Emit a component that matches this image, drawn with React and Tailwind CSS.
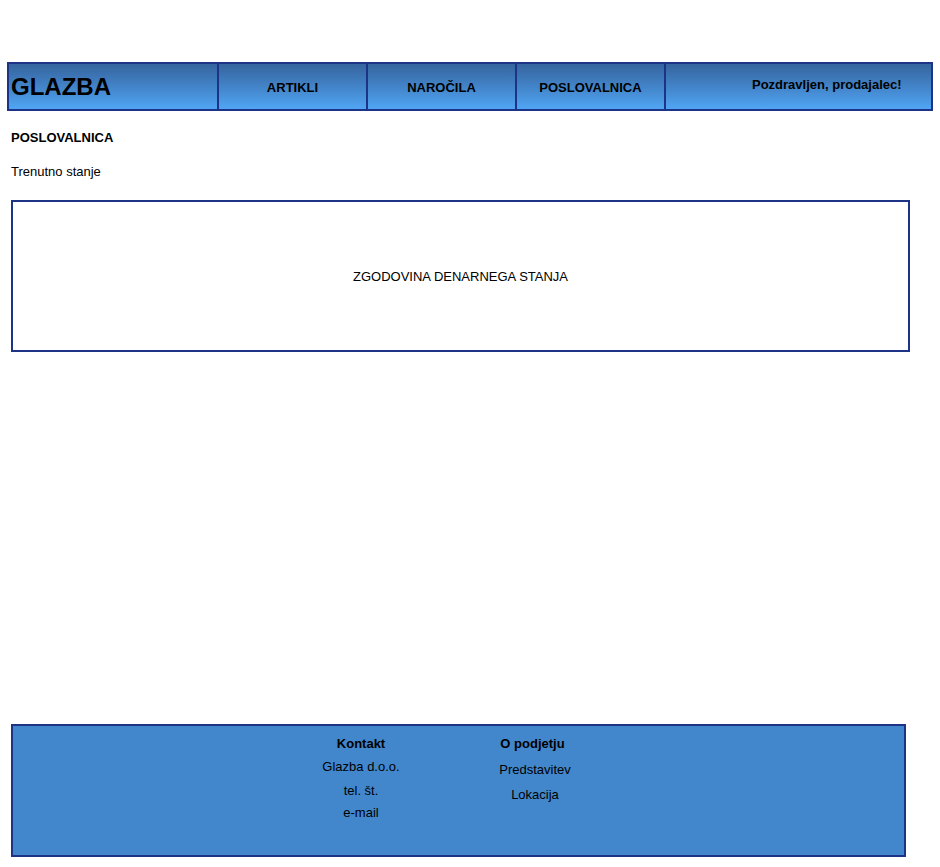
export default function App() {
  const navItems = ["ARTIKLI", "NAROČILA", "POSLOVALNICA"];

  return (
    <div className="min-h-screen bg-white text-black pt-[62px] font-['Liberation_Sans',Arial,sans-serif] text-[13px] leading-4">
      {/* header */}
      <div className="ml-[7px] w-[926px] h-[49px] flex border-2 border-[#1c3386] bg-linear-to-b from-[#35649e] to-[#50a5f4]">
        <div className="w-[208px] flex items-center pl-[2px] pt-[1px] text-[24px] leading-7 font-bold">
          GLAZBA
        </div>
        {navItems.map((item) => (
          <div
            key={item}
            className="w-[149px] border-l-2 border-[#1c3386] flex items-center justify-center pt-[2px] font-bold"
          >
            {item}
          </div>
        ))}
        <div className="flex-1 border-l-2 border-[#1c3386] pt-[13px] pl-[86px] font-bold">
          Pozdravljen, prodajalec!
        </div>
      </div>

      {/* content */}
      <div className="px-[11px]">
        <h2 className="mt-[19px] font-bold">POSLOVALNICA</h2>
        <p className="mt-[18px]">Trenutno stanje</p>

        <div className="mt-[20px] w-[899px] h-[152px] border-2 border-[#1c3386] flex items-center justify-center pt-[2px]">
          ZGODOVINA DENARNEGA STANJA
        </div>

        {/* footer */}
        <div className="mt-[372px] w-[895px] h-[133px] border-2 border-[#1c3386] bg-[#4287cc] flex pt-[10px] pl-[298px] gap-[74px]">
          <div className="w-[100px] flex flex-col items-center">
            <div className="font-bold">Kontakt</div>
            <div className="mt-[7px]">Glazba d.o.o.</div>
            <div className="mt-[8px]">tel. št.</div>
            <div className="mt-[6px]">e-mail</div>
          </div>
          <div className="w-[100px] flex flex-col items-center">
            <div className="font-bold -ml-[5px]">O podjetju</div>
            <div className="mt-[10px]">Predstavitev</div>
            <div className="mt-[9px]">Lokacija</div>
          </div>
        </div>
      </div>
    </div>
  );
}
